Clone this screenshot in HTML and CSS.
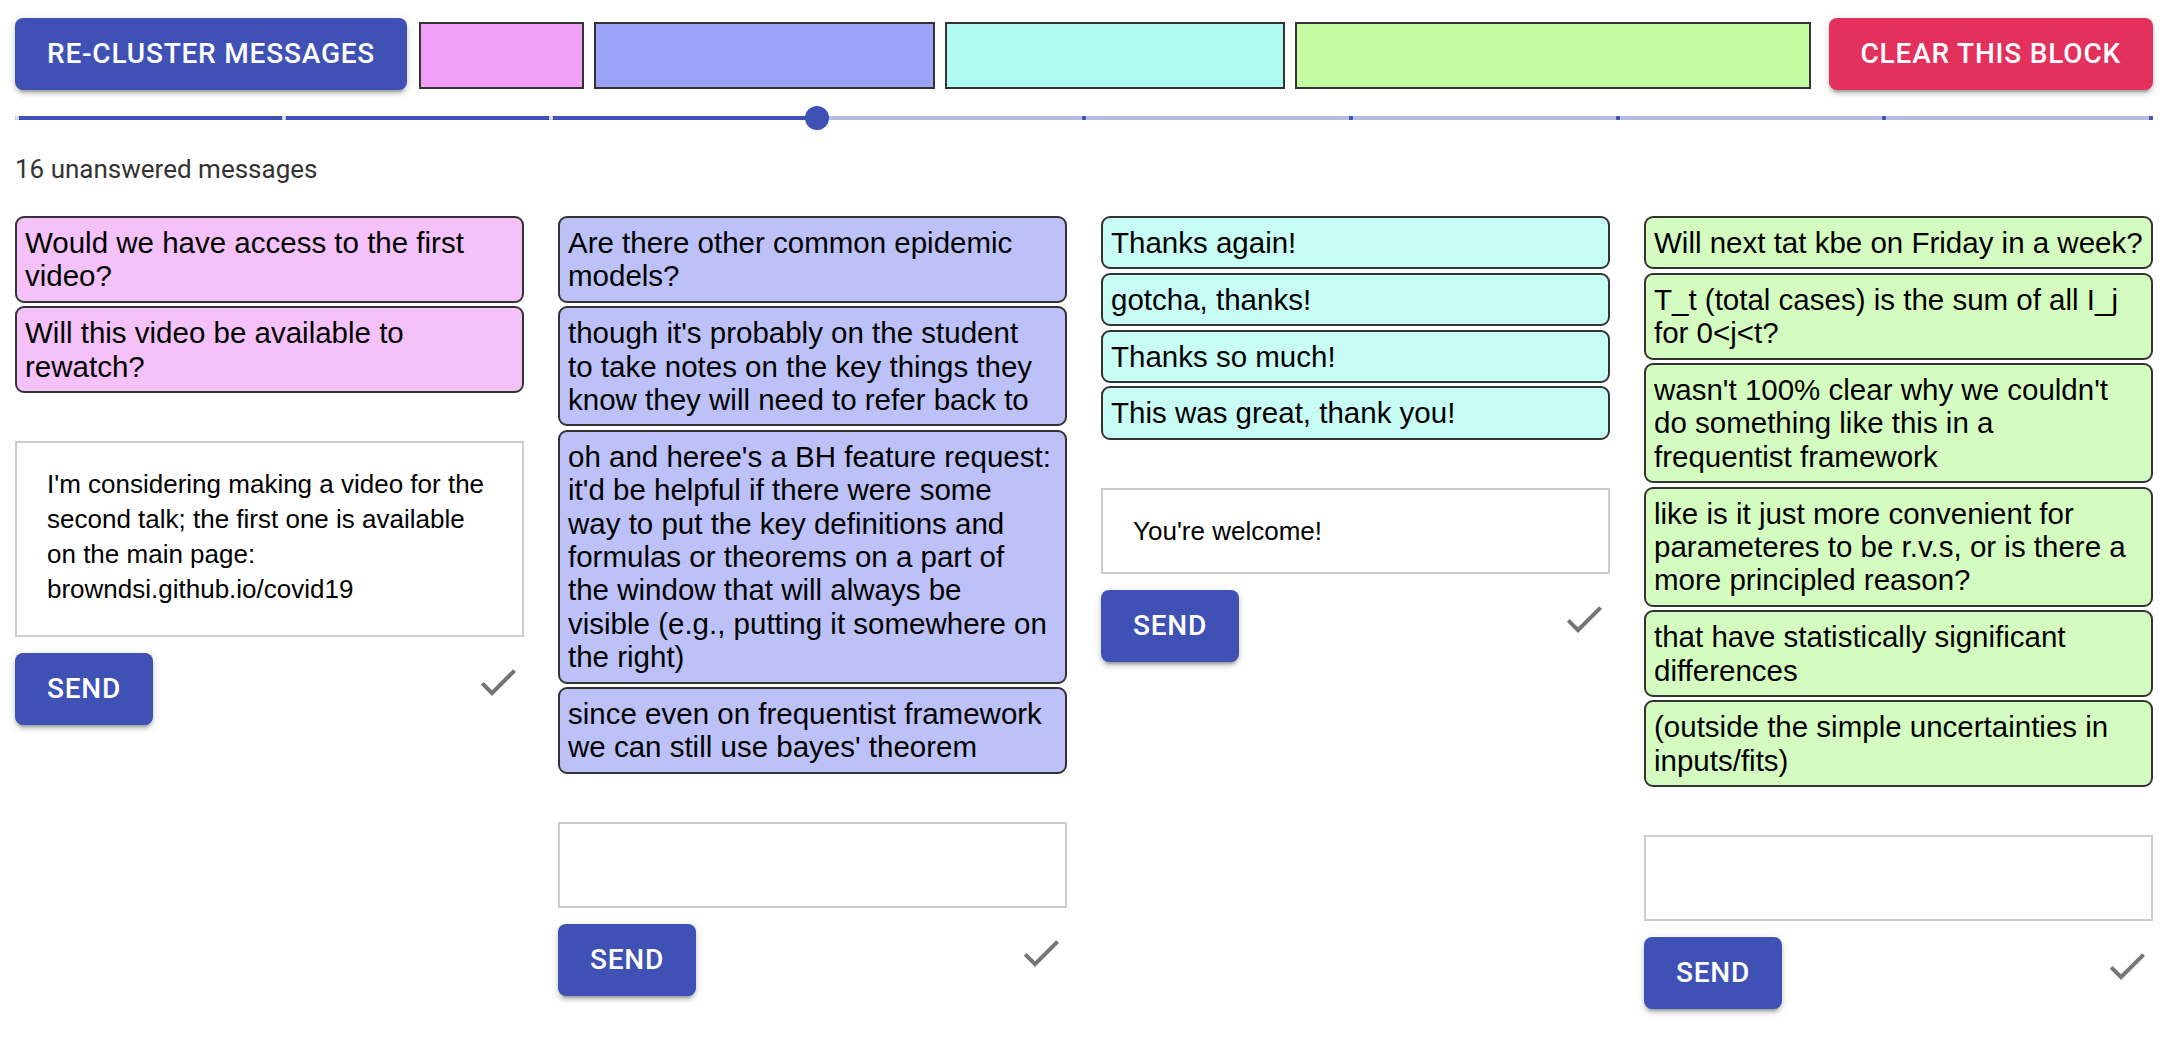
FILE: index.html
```html
<!DOCTYPE html>
<html lang="en">
<head>
<meta charset="utf-8">
<title>Message clusters</title>
<link rel="stylesheet" href="styles.css">
</head>
<body>
<div class="page">
  <div class="topbar">
    <button class="btn btn-primary">Re-cluster messages</button>
    <div class="swatches">
      <div class="swatch sw-pink" style="--n:2"></div>
      <div class="swatch sw-blue" style="--n:4"></div>
      <div class="swatch sw-cyan" style="--n:4"></div>
      <div class="swatch sw-green" style="--n:6"></div>
    </div>
    <button class="btn btn-danger">Clear this block</button>
  </div>

  <div class="slider">
    <div class="rail">
      <div class="rail-fill" style="width:37.5%"></div>
      <div class="marks">
        <span class="mark active"></span>
        <span class="mark active"></span>
        <span class="mark active"></span>
        <span class="mark active"></span>
        <span class="mark"></span>
        <span class="mark"></span>
        <span class="mark"></span>
        <span class="mark"></span>
        <span class="mark"></span>
      </div>
      <span class="thumb" style="left:37.5%"></span>
    </div>
  </div>

  <div class="count">16 unanswered messages</div>

  <div class="columns">
    <div class="column pink">
      <div class="cards">
        <div class="card">Would we have access to the first<br>video?</div>
        <div class="card">Will this video be available to<br>rewatch?</div>
      </div>
      <textarea class="reply tall">I'm considering making a video for the
second talk; the first one is available
on the main page:
browndsi.github.io/covid19</textarea>
      <div class="actions">
        <button class="btn btn-primary btn-send">Send</button>
        <svg class="check" viewBox="0 0 24 24"><path d="M9 16.17L4.83 12l-1.42 1.41L9 19 21 7l-1.41-1.41z"/></svg>
      </div>
    </div>

    <div class="column blue">
      <div class="cards">
        <div class="card">Are there other common epidemic<br>models?</div>
        <div class="card">though it's probably on the student<br>to take notes on the key things they<br>know they will need to refer back to</div>
        <div class="card">oh and heree's a BH feature request:<br>it'd be helpful if there were some<br>way to put the key definitions and<br>formulas or theorems on a part of<br>the window that will always be<br>visible (e.g., putting it somewhere on<br>the right)</div>
        <div class="card">since even on frequentist framework<br>we can still use bayes' theorem</div>
      </div>
      <textarea class="reply"></textarea>
      <div class="actions">
        <button class="btn btn-primary btn-send">Send</button>
        <svg class="check" viewBox="0 0 24 24"><path d="M9 16.17L4.83 12l-1.42 1.41L9 19 21 7l-1.41-1.41z"/></svg>
      </div>
    </div>

    <div class="column cyan">
      <div class="cards">
        <div class="card">Thanks again!</div>
        <div class="card">gotcha, thanks!</div>
        <div class="card">Thanks so much!</div>
        <div class="card">This was great, thank you!</div>
      </div>
      <textarea class="reply">You're welcome!</textarea>
      <div class="actions">
        <button class="btn btn-primary btn-send">Send</button>
        <svg class="check" viewBox="0 0 24 24"><path d="M9 16.17L4.83 12l-1.42 1.41L9 19 21 7l-1.41-1.41z"/></svg>
      </div>
    </div>

    <div class="column green">
      <div class="cards">
        <div class="card">Will next tat kbe on Friday in a week?</div>
        <div class="card">T_t (total cases) is the sum of all I_j<br>for 0&lt;j&lt;t?</div>
        <div class="card">wasn't 100% clear why we couldn't<br>do something like this in a<br>frequentist framework</div>
        <div class="card">like is it just more convenient for<br>parameteres to be r.v.s, or is there a<br>more principled reason?</div>
        <div class="card">that have statistically significant<br>differences</div>
        <div class="card">(outside the simple uncertainties in<br>inputs/fits)</div>
      </div>
      <textarea class="reply"></textarea>
      <div class="actions">
        <button class="btn btn-primary btn-send">Send</button>
        <svg class="check" viewBox="0 0 24 24"><path d="M9 16.17L4.83 12l-1.42 1.41L9 19 21 7l-1.41-1.41z"/></svg>
      </div>
    </div>
  </div>
</div>
</body>
</html>
```

FILE: styles.css
```css
* {
  box-sizing: border-box;
}

body {
  margin: 0;
  background: #ffffff;
  font-family: Roboto, "Liberation Sans", sans-serif;
}

.page {
  width: 2138px;
  margin-left: 15px;
  padding-top: 18px;
  padding-bottom: 20px;
}

/* ---------- top bar ---------- */
.topbar {
  display: flex;
  align-items: flex-start;
  gap: 10px;
  height: 72px;
}

.btn {
  font-family: Roboto, sans-serif;
  font-weight: 500;
  font-size: 28px;
  line-height: 48px;
  letter-spacing: 0.8px;
  text-transform: uppercase;
  color: #ffffff;
  border: 0;
  border-radius: 8px;
  padding: 12px 32px;
  box-shadow: 0 6px 2px -4px rgba(0, 0, 0, 0.2),
              0 4px 4px 0 rgba(0, 0, 0, 0.14),
              0 2px 10px 0 rgba(0, 0, 0, 0.12);
  cursor: pointer;
  white-space: nowrap;
  flex-shrink: 0;
}

.btn-primary {
  background: #3f51b5;
}

.btn-danger {
  background: #e3305c;
}

.swatches {
  flex: 1;
  display: flex;
  height: 67px;
  margin: 4px 3px 0 -3px;
}

.swatch {
  flex: 0 0 auto;
  width: calc(var(--n) * 6.25% - 10px);
  margin: 0 5px;
  border: 2px solid #333333;
}

.sw-pink { background: #f0a0f8; }
.sw-blue { background: #9aa3f7; }
.sw-cyan { background: #b0fbef; }
.sw-green { background: #c3fba3; }

/* ---------- slider ---------- */
.slider {
  margin-top: 14px;
  padding: 12px 0;
}

.rail {
  position: relative;
  height: 4px;
  background: #b6bde3;
}

.rail-fill {
  height: 4px;
  background: #3f51b5;
}

.marks {
  position: absolute;
  inset: 0;
  display: flex;
  justify-content: space-between;
  align-items: center;
}

.mark {
  width: 4px;
  height: 4px;
  border-radius: 1px;
  background: #3f51b5;
}

.mark.active {
  background: #d9dcf0;
}

.thumb {
  position: absolute;
  top: 50%;
  width: 24px;
  height: 24px;
  margin: -12px 0 0 -12px;
  border-radius: 50%;
  background: #3f51b5;
}

/* ---------- count ---------- */
.count {
  margin-top: 17px;
  font-family: Roboto, sans-serif;
  font-size: 26px;
  line-height: 40px;
  color: #333333;
}

/* ---------- columns ---------- */
.columns {
  display: grid;
  grid-template-columns: repeat(4, 1fr);
  gap: 34px;
  margin-top: 27px;
  align-items: start;
}

.column {
  display: flex;
  flex-direction: column;
}

.cards {
  display: flex;
  flex-direction: column;
  gap: 3.4px;
}

.card {
  border: 2px solid #333333;
  border-radius: 9px;
  padding: 8px 8px;
  font-family: "Liberation Sans", Arial, sans-serif;
  font-size: 29.5px;
  line-height: 33.4px;
  color: #000000;
  white-space: nowrap;
}

.pink .card { background: #f4c2f8; }
.blue .card { background: #bcc1f8; }
.cyan .card { background: #c8fdf5; }
.green .card { background: #d5fcc0; }

.reply {
  display: block;
  width: 100%;
  height: 86px;
  margin: 48px 0 0 0;
  padding: 24px 30px;
  border: 2px solid #cccccc;
  border-radius: 0;
  background: #ffffff;
  font-family: "Liberation Sans", Arial, sans-serif;
  font-size: 26px;
  line-height: 35px;
  color: #000000;
  resize: none;
  overflow: hidden;
  outline: none;
}

.reply.tall {
  height: 196px;
}

.actions {
  display: flex;
  justify-content: space-between;
  align-items: flex-start;
  margin-top: 16px;
}

.check {
  width: 48px;
  height: 48px;
  margin-top: 5px;
  margin-right: 2px;
  fill: #757575;
}
```
